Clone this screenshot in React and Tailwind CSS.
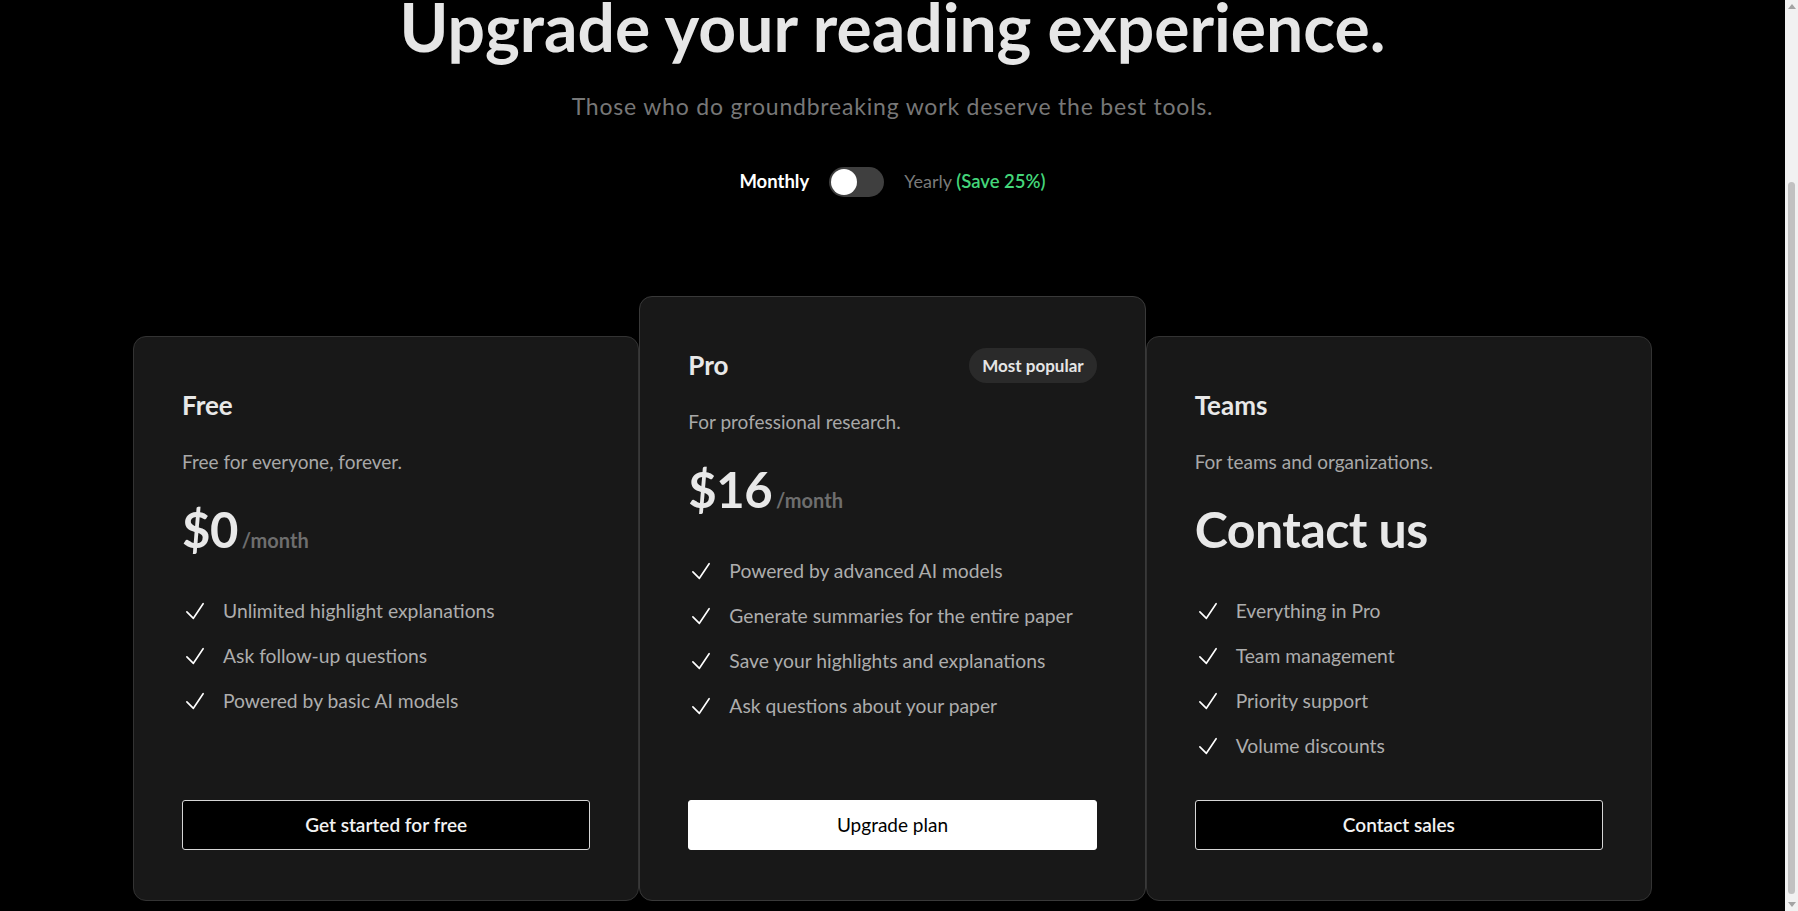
import React, { useLayoutEffect, useRef, useState } from "react";

const plans = [
  {
    name: "Free",
    desc: "Free for everyone, forever.",
    price: "$0",
    features: [
      "Unlimited highlight explanations",
      "Ask follow-up questions",
      "Powered by basic AI models",
    ],
    cta: "Get started for free",
  },
  {
    name: "Pro",
    popular: true,
    desc: "For professional research.",
    price: "$16",
    features: [
      "Powered by advanced AI models",
      "Generate summaries for the entire paper",
      "Save your highlights and explanations",
      "Ask questions about your paper",
    ],
    cta: "Upgrade plan",
  },
  {
    name: "Teams",
    desc: "For teams and organizations.",
    contact: true,
    features: [
      "Everything in Pro",
      "Team management",
      "Priority support",
      "Volume discounts",
    ],
    cta: "Contact sales",
  },
];

function CheckIcon() {
  return (
    <svg
      viewBox="0 0 24 24"
      fill="none"
      stroke="currentColor"
      strokeWidth={1.5}
      className="h-[26px] w-[26px] shrink-0 text-white"
    >
      <path strokeLinecap="round" strokeLinejoin="round" d="m4.5 12.75 6 6 9-13.5" />
    </svg>
  );
}

function PlanCard({ plan }) {
  const pro = plan.popular;
  return (
    <div
      className={
        pro
          ? "relative z-10 -mt-[40px] flex flex-col rounded-[13px] border border-[#393939] bg-[#181818] px-[48px] pt-[51px] pb-[50px]"
          : "relative flex flex-col rounded-[13px] border border-[#333333] bg-[#181818] px-[48px] pt-[51px] pb-[50px]"
      }
    >
      <div className="flex h-[35px] items-center justify-between">
        <h3 className="text-[26px] font-bold leading-[35px] text-[#e8e8e8]">{plan.name}</h3>
        {pro && (
          <span className="rounded-full bg-[#2a2a2a] px-[13px] py-[4px] text-[17px] font-bold leading-[27px] text-[#e5e5e5]">
            Most popular
          </span>
        )}
      </div>

      <p className="mt-[24px] text-[19px] leading-[30px] text-[#a8a8a8]">{plan.desc}</p>

      <div className="mt-[23px] flex items-baseline">
        {plan.contact ? (
          <span className="text-[50px] font-bold leading-[58px] tracking-[-0.5px] text-[#e8e8e8]">
            Contact us
          </span>
        ) : (
          <>
            <span className="text-[49px] font-bold leading-[58px] tracking-[-0.5px] text-[#e8e8e8]">
              {plan.price}
            </span>
            <span className="ml-[4px] text-[20px] font-bold text-[#6e6e6e]">/month</span>
          </>
        )}
      </div>

      <ul className="mt-[37px] flex flex-col gap-[14px]">
        {plan.features.map((f) => (
          <li key={f} className="flex items-center gap-[15px]">
            <CheckIcon />
            <span className="text-[19.3px] leading-[31px] text-[#adadad]">{f}</span>
          </li>
        ))}
      </ul>

      <div className="mt-auto pt-[39px]">
        <button
          className={
            pro
              ? "h-[50px] w-full rounded-[3px] border border-white bg-white text-[19px] text-black"
              : "h-[50px] w-full rounded-[3px] border border-[#d6d6d6] bg-black text-[19px] font-semibold text-[#f2f2f2]"
          }
        >
          {plan.cta}
        </button>
      </div>
    </div>
  );
}

export default function App() {
  const scroller = useRef(null);
  const [yearly, setYearly] = useState(false);

  useLayoutEffect(() => {
    const el = scroller.current;
    if (el) el.scrollTop = el.scrollHeight;
  }, []);

  return (
    <div className="flex h-[911px] bg-black font-['Lato','Open_Sans',sans-serif]">
      <div ref={scroller} className="flex-1 overflow-y-auto [scrollbar-width:none]">
        <div className="pt-[202px] pb-[10px]">
          <h1 className="text-center text-[66px] font-bold leading-[66px] text-[#e6e6e6]">
            Upgrade your reading experience.
          </h1>
          <p className="mt-[31px] text-center text-[23px] leading-[30px] tracking-[0.8px] text-[#777777]">
            Those who do groundbreaking work deserve the best tools.
          </p>

          <div className="mt-[46px] flex h-[30px] items-center justify-center gap-5">
            <span className="text-[18.5px] font-bold text-white">Monthly</span>
            <button
              onClick={() => setYearly(!yearly)}
              className={
                yearly
                  ? "flex h-[30px] w-[55px] items-center justify-end rounded-full bg-[#3f3f3f] p-[2px]"
                  : "flex h-[30px] w-[55px] items-center justify-start rounded-full bg-[#3f3f3f] p-[2px]"
              }
            >
              <span className="h-[26px] w-[26px] rounded-full bg-white" />
            </button>
            <span className="text-[18px] text-[#7a7a7a]">
              Yearly <span className="text-[18.5px] font-semibold text-[#44d67a]">(Save 25%)</span>
            </span>
          </div>

          <div className="mx-auto mt-[139px] grid w-[1519px] grid-cols-3">
            {plans.map((p) => (
              <PlanCard key={p.name} plan={p} />
            ))}
          </div>
        </div>
      </div>

      {/* window scrollbar */}
      <div className="flex w-[13px] shrink-0 flex-col items-center bg-[#f1f1f1]">
        <div className="mt-[4px] h-0 w-0 border-x-[4px] border-b-[5px] border-x-transparent border-b-[#a3a3a3]" />
        <div className="mt-[173px] w-[7px] flex-1 rounded-full bg-[#c1c1c1]" />
        <div className="mt-[8px] mb-[4px] h-0 w-0 border-x-[4px] border-t-[5px] border-x-transparent border-t-[#a3a3a3]" />
      </div>
    </div>
  );
}
